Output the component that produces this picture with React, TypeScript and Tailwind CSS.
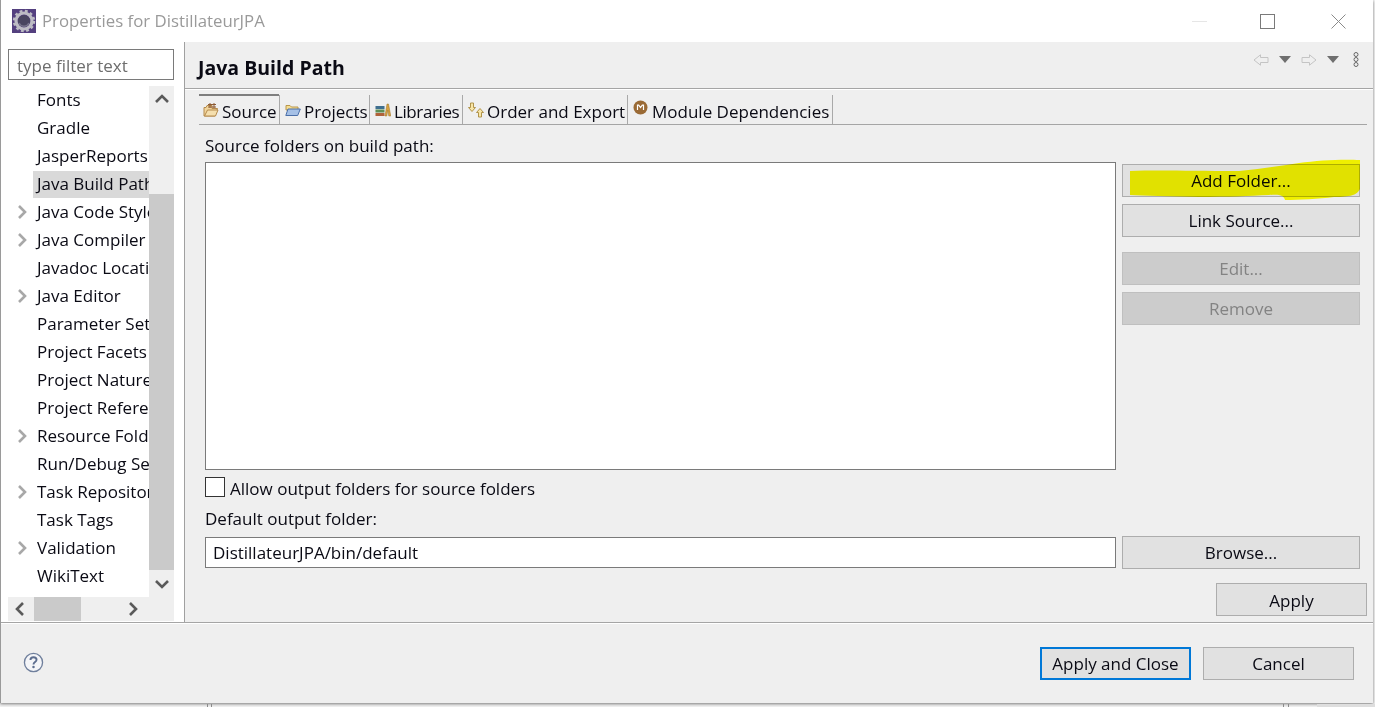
import React from "react";

const F = { fontFamily: '"Open Sans", "Noto Sans", sans-serif' };

function Chevron({ dir, className }: { dir: "up" | "down" | "left" | "right"; className: string }) {
  const pts = {
    up: "2,10 8,4 14,10",
    down: "2,5 8,11 14,5",
    left: "10,2 4,8 10,14",
    right: "5,2 11,8 5,14",
  }[dir];
  return (
    <svg width="16" height="16" viewBox="0 0 16 16" className={className}>
      <polyline points={pts} fill="none" stroke="currentColor" strokeWidth="2.6" />
    </svg>
  );
}

const rows: [string, boolean, boolean?][] = [
  ["Fonts", false],
  ["Gradle", false],
  ["JasperReports", false],
  ["Java Build Path", false, true],
  ["Java Code Style", true],
  ["Java Compiler", true],
  ["Javadoc Location", false],
  ["Java Editor", true],
  ["Parameter Sets", false],
  ["Project Facets", false],
  ["Project Natures", false],
  ["Project References", false],
  ["Resource Folders", true],
  ["Run/Debug Settings", false],
  ["Task Repository", true],
  ["Task Tags", false],
  ["Validation", true],
  ["WikiText", false],
];

function Btn({ children, className = "" }: { children: React.ReactNode; className?: string }) {
  return (
    <div className={`flex items-center justify-center border border-[#adadad] bg-[#e1e1e1] text-[#0a0a14] text-[17px] ${className}`}>
      {children}
    </div>
  );
}

function Disabled({ children }: { children: React.ReactNode }) {
  return (
    <div className="flex h-[33px] items-center justify-center border border-[#bfbfbf] bg-[#cccccc] text-[#838383] text-[17px]">
      {children}
    </div>
  );
}

function Logo() {
  return (
    <svg width="24" height="24" viewBox="0 0 24 24" className="shrink-0">
      <rect width="24" height="24" fill="#54407f" />
      <circle cx="12" cy="12" r="8" fill="none" stroke="#bdbcc4" strokeWidth="3.2" />
      <circle cx="12" cy="12" r="10" fill="none" stroke="#bdbcc4" strokeWidth="2.4" strokeDasharray="2.8 2.5" />
      <circle cx="12" cy="12" r="6" fill="#4a4660" />
      <path d="M7 14a5.5 5.5 0 0 0 10 0" fill="none" stroke="#77748c" strokeWidth="1.5" />
    </svg>
  );
}

function SourceIcon() {
  return (
    <svg width="16" height="16" viewBox="0 0 16 16" className="shrink-0">
      <path d="M1 5.5h2l1-2h5v3h5.5l-2.5 7.5H1z" fill="#f1d59c" stroke="#b58a4c" />
      <path d="M7 1v5M11 1v5M5 2.5h8M5 5h8" stroke="#8d5a34" strokeWidth="1" fill="none" />
      <path d="M1.5 14L4.5 8h10.5L12.5 14z" fill="#f5dfae" stroke="#b58a4c" />
    </svg>
  );
}

function ProjectsIcon() {
  return (
    <svg width="16" height="16" viewBox="0 0 16 16" className="shrink-0">
      <path d="M1 3.5h4l1.5 1.5H13v3H1z" fill="#f5dd92" stroke="#b9964a" />
      <path d="M.8 13.5L3 7h12.3l-2.6 6.5z" fill="#a5c0e6" stroke="#4b6fa8" />
    </svg>
  );
}

function LibrariesIcon() {
  return (
    <svg width="16" height="16" viewBox="0 0 16 16" className="shrink-0">
      <rect x="0.5" y="4" width="9" height="3" fill="#3f6f8f" />
      <rect x="0.5" y="7.5" width="9" height="3" fill="#5f8f55" />
      <rect x="0.5" y="11" width="9" height="3" fill="#b0623a" />
      <path d="M10 14L12 2h1.5L15.8 14h-2l-1-6-1 6z" fill="#d8a23f" stroke="#9a7026" strokeWidth="0.5" />
    </svg>
  );
}

function OrderIcon() {
  return (
    <svg width="16" height="16" viewBox="0 0 16 16" className="shrink-0">
      <path d="M2.5 1h3v4.5H7.5L4 9.5.5 5.5h2z" fill="#f8e6a8" stroke="#a98a3c" strokeWidth="0.9" />
      <path d="M10.5 15h3v-4.5h2L12 6.5 8.5 10.5h2z" fill="#f8e6a8" stroke="#a98a3c" strokeWidth="0.9" />
    </svg>
  );
}

function ModuleIcon() {
  return (
    <svg width="15" height="15" viewBox="0 0 15 15" className="mb-[5px] shrink-0">
      <circle cx="7.5" cy="7.5" r="7" fill="#9a6a35" />
      <path d="M4.5 10V5.2h1.2l1.8 2.4 1.8-2.4h1.2V10" fill="none" stroke="#fff" strokeWidth="1.2" />
    </svg>
  );
}

function NavArrow({ dir }: { dir: "left" | "right" }) {
  return (
    <svg width="16" height="12" viewBox="0 0 16 12" className={dir === "right" ? "" : "-scale-x-100"}>
      <path d="M1 3.5h7.5V.8L15 6l-6.5 5.2V8.5H1z" fill="none" stroke="#c4c4c4" strokeWidth="1" />
    </svg>
  );
}

function Down() {
  return (
    <svg width="12" height="7" viewBox="0 0 12 7">
      <path d="M0 0h12L6 7z" fill="#6f6f6f" />
    </svg>
  );
}

function Tab({ icon, label, className = "", labelClass = "" }: { icon: React.ReactNode; label: string; className?: string; labelClass?: string }) {
  return (
    <div className={`flex h-[29px] items-center border-r border-[#a9a9a9] text-[17px] text-[#0a0a14] ${className}`}>
      {icon}
      <span className={`pt-[4px] ${labelClass}`}>{label}</span>
    </div>
  );
}

export default function App() {
  return (
    <div style={F} className="relative h-[707px] w-[1375px] overflow-hidden bg-[#f4f4f4]">
      <div className="relative flex h-[703px] w-[1373px] flex-col border-l border-[#9a9a9a] bg-[#efefef] shadow-[0_1px_3px_rgba(0,0,0,0.5)]">
        {/* title bar */}
        <div className="flex h-[42px] shrink-0 items-center bg-white pl-[11px]">
          <Logo />
          <span className="ml-[6px] text-[16.8px] text-[#9a9a9a]">Properties for DistillateurJPA</span>
          <div className="ml-auto flex items-center">
            <div className="h-px w-[15px] bg-[#e6e6e6]" />
            <div className="ml-[53px] h-[15px] w-[15px] border border-[#7a7a7a]" />
            <svg width="15" height="15" viewBox="0 0 15 15" className="ml-[56px] mr-[27px]">
              <path d="M.5.5l14 14M14.5.5l-14 14" stroke="#8a8a8a" strokeWidth="1" />
            </svg>
          </div>
        </div>

        {/* body */}
        <div className="flex h-[581px] shrink-0 border-b border-[#a5a5a5]">
          {/* left panel */}
          <div className="flex w-[184px] shrink-0 flex-col border-r border-[#a0a0a0] bg-white pl-[7px] pr-[10px] pt-[7px]">
            <div className="flex h-[31px] shrink-0 items-center border border-[#7a7a7a] pl-[8px] pt-[2px] text-[17px] text-[#6e6e6e]">
              type filter text
            </div>
            <div className="mt-[6px] flex h-[511px] shrink-0">
              <div className="w-[141px] shrink-0 overflow-hidden">
                {rows.map(([label, arrow, selected]) => (
                  <div key={label} className="flex h-[28px] items-center">
                    <div className="flex w-[25px] shrink-0 items-center justify-center pl-[3px]">
                      {arrow && <Chevron dir="right" className="text-[#a8a8a8]" />}
                    </div>
                    <div className={`flex h-[27px] grow items-center overflow-hidden whitespace-nowrap pl-[4px] text-[17px] text-[#0a0a14] ${selected ? "bg-[#d9d9d9]" : ""}`}>
                      {label}
                    </div>
                  </div>
                ))}
              </div>
              <div className="flex w-[25px] shrink-0 flex-col bg-[#efefef]">
                <div className="flex h-[108px] shrink-0 items-start justify-center pt-[6px]">
                  <Chevron dir="up" className="text-[#5a5a5a]" />
                </div>
                <div className="h-[376px] shrink-0 bg-[#cacaca]" />
                <div className="flex grow items-center justify-center">
                  <Chevron dir="down" className="text-[#5a5a5a]" />
                </div>
              </div>
            </div>
            <div className="flex h-[24px] shrink-0 items-center bg-[#efefef]">
              <div className="flex w-[26px] shrink-0 justify-center">
                <Chevron dir="left" className="text-[#5a5a5a]" />
              </div>
              <div className="h-full w-[47px] shrink-0 bg-[#cacaca]" />
              <div className="ml-[44px] flex w-[16px] shrink-0 justify-center">
                <Chevron dir="right" className="text-[#5a5a5a]" />
              </div>
            </div>
          </div>

          {/* right panel */}
          <div className="flex grow flex-col">
            <div className="flex h-[47px] shrink-0 items-center border-b border-[#a5a5a5] pl-[13px] pr-[14px] pt-[5px] shadow-[0_1px_0_#ffffff]">
              <span className="text-[19.5px] font-bold text-[#0a0a14]">Java Build Path</span>
              <div className="ml-auto flex -translate-y-[8px] items-center gap-[10px]">
                <NavArrow dir="left" />
                <Down />
                <NavArrow dir="right" />
                <Down />
                <svg width="6" height="15" viewBox="0 0 6 15" className="ml-[4px]">
                  <circle cx="3" cy="2.5" r="2" fill="none" stroke="#666" />
                  <circle cx="3" cy="7.5" r="2" fill="none" stroke="#666" />
                  <circle cx="3" cy="12.5" r="2" fill="none" stroke="#666" />
                </svg>
              </div>
            </div>

            {/* tabs */}
            <div className="ml-[14px] mr-[6px] mt-[6px] flex h-[30px] shrink-0 items-end border-b border-[#a5a5a5]">
              <div className="relative flex h-[29px] w-[81px] items-center gap-[3px] border-r border-[#a9a9a9] pl-[4px] text-[17px] text-[#0a0a14]">
                <div className="absolute -top-px left-0 h-[2px] w-[80px] bg-[#7e7e7e]" />
                <SourceIcon />
                <span className="pt-[4px]">Source</span>
              </div>
              <Tab icon={<ProjectsIcon />} label="Projects" className="w-[90px] gap-[3px] pl-[5px]" />
              <Tab icon={<LibrariesIcon />} label="Libraries" labelClass="tracking-[-0.4px]" className="w-[93px] gap-[3px] pl-[5px]" />
              <Tab icon={<OrderIcon />} label="Order and Export" className="w-[165px] gap-[3px] pl-[5px]" />
              <Tab icon={<ModuleIcon />} label="Module Dependencies" className="w-[205px] gap-[4px] pl-[5px]" />
            </div>

            {/* content */}
            <div className="flex grow flex-col pl-[20px] pr-[6px]">
              <div className="flex h-[37px] shrink-0 items-center pt-[4px] text-[17px] text-[#0a0a14]">
                Source folders on build path:
              </div>
              <div className="flex h-[308px] shrink-0 gap-[6px]">
                <div className="h-full w-[911px] shrink-0 border border-[#7a7a7a] bg-white" />
                <div className="relative flex w-[238px] shrink-0 flex-col pt-[2px]">
                  <Btn className="h-[33px]">Add Folder...</Btn>
                  <Btn className="mt-[7px] h-[33px]">Link Source...</Btn>
                  <div className="mt-[15px]">
                    <Disabled>Edit...</Disabled>
                  </div>
                  <div className="mt-[7px]">
                    <Disabled>Remove</Disabled>
                  </div>
                  <svg width="232" height="44" viewBox="0 0 232 44" className="pointer-events-none absolute -top-[3px] left-[7px] mix-blend-multiply">
                    <path d="M1 12C30 11 60 12 110 12C130 10 150 7 170 4C190 1 215 0 231 1V30C228 36 222 38 205 38C190 40 170 41 156 41C155 36 150 35 140 36C120 37 100 38 70 38C40 37 15 37 1 36z" fill="#ffff00" />
                  </svg>
                </div>
              </div>
              <div className="mt-[7px] flex h-[20px] shrink-0 items-center">
                <div className="h-[20px] w-[20px] shrink-0 border border-[#333333] bg-white" />
                <span className="ml-[5px] pt-[3px] text-[17px] text-[#0a0a14]">Allow output folders for source folders</span>
              </div>
              <div className="flex h-[44px] shrink-0 items-center text-[17px] text-[#0a0a14]">
                Default output folder:
              </div>
              <div className="-mt-[5px] flex h-[34px] shrink-0 items-start gap-[6px]">
                <div className="mt-px flex h-[31px] w-[911px] shrink-0 items-center border border-[#7a7a7a] bg-white pl-[7px] text-[17px] text-[#0a0a14]">
                  DistillateurJPA/bin/default
                </div>
                <Btn className="h-[33px] w-[238px] shrink-0">Browse...</Btn>
              </div>
              <div className="mt-[13px] flex justify-end">
                <Btn className="h-[33px] w-[151px] pt-[2px]">Apply</Btn>
              </div>
            </div>
          </div>
        </div>

        {/* footer */}
        <div className="flex grow items-center border-t border-white pl-[22px] pr-[19px]">
          <svg width="21" height="21" viewBox="0 0 22 22" className="-translate-y-[1px]">
            <circle cx="11" cy="11" r="9.5" fill="#f4f5f8" stroke="#6f7f9c" strokeWidth="1.4" />
            <path d="M7.8 8.3C7.8 6.5 9.2 5.5 11 5.5s3.2 1 3.2 2.7c0 2.4-3.2 2.3-3.2 4.8" fill="none" stroke="#5d6e8f" strokeWidth="2" />
            <circle cx="11" cy="15.8" r="1.3" fill="#5d6e8f" />
          </svg>
          <div className="ml-auto flex items-center gap-[12px]">
            <div className="flex h-[33px] w-[151px] items-center justify-center border-2 border-[#0078d7] bg-[#e1e1e1] text-[17px] text-[#0a0a14]">
              Apply and Close
            </div>
            <Btn className="h-[33px] w-[151px]">Cancel</Btn>
          </div>
        </div>
      </div>

      {/* desktop behind the dialog */}
      <div className="absolute bottom-0 left-[207px] h-[3px] w-px bg-[#8a8a8a]" />
      <div className="absolute bottom-0 left-[211px] h-[3px] w-px bg-[#8a8a8a]" />
      <div className="absolute bottom-0 left-[1283px] h-[3px] w-px bg-[#8a8a8a]" />
      <div className="absolute bottom-0 left-[1288px] h-[3px] w-px bg-[#8a8a8a]" />
      <div className="absolute bottom-0 left-[1317px] h-[3px] w-[58px] bg-[#dedede]" />
    </div>
  );
}
